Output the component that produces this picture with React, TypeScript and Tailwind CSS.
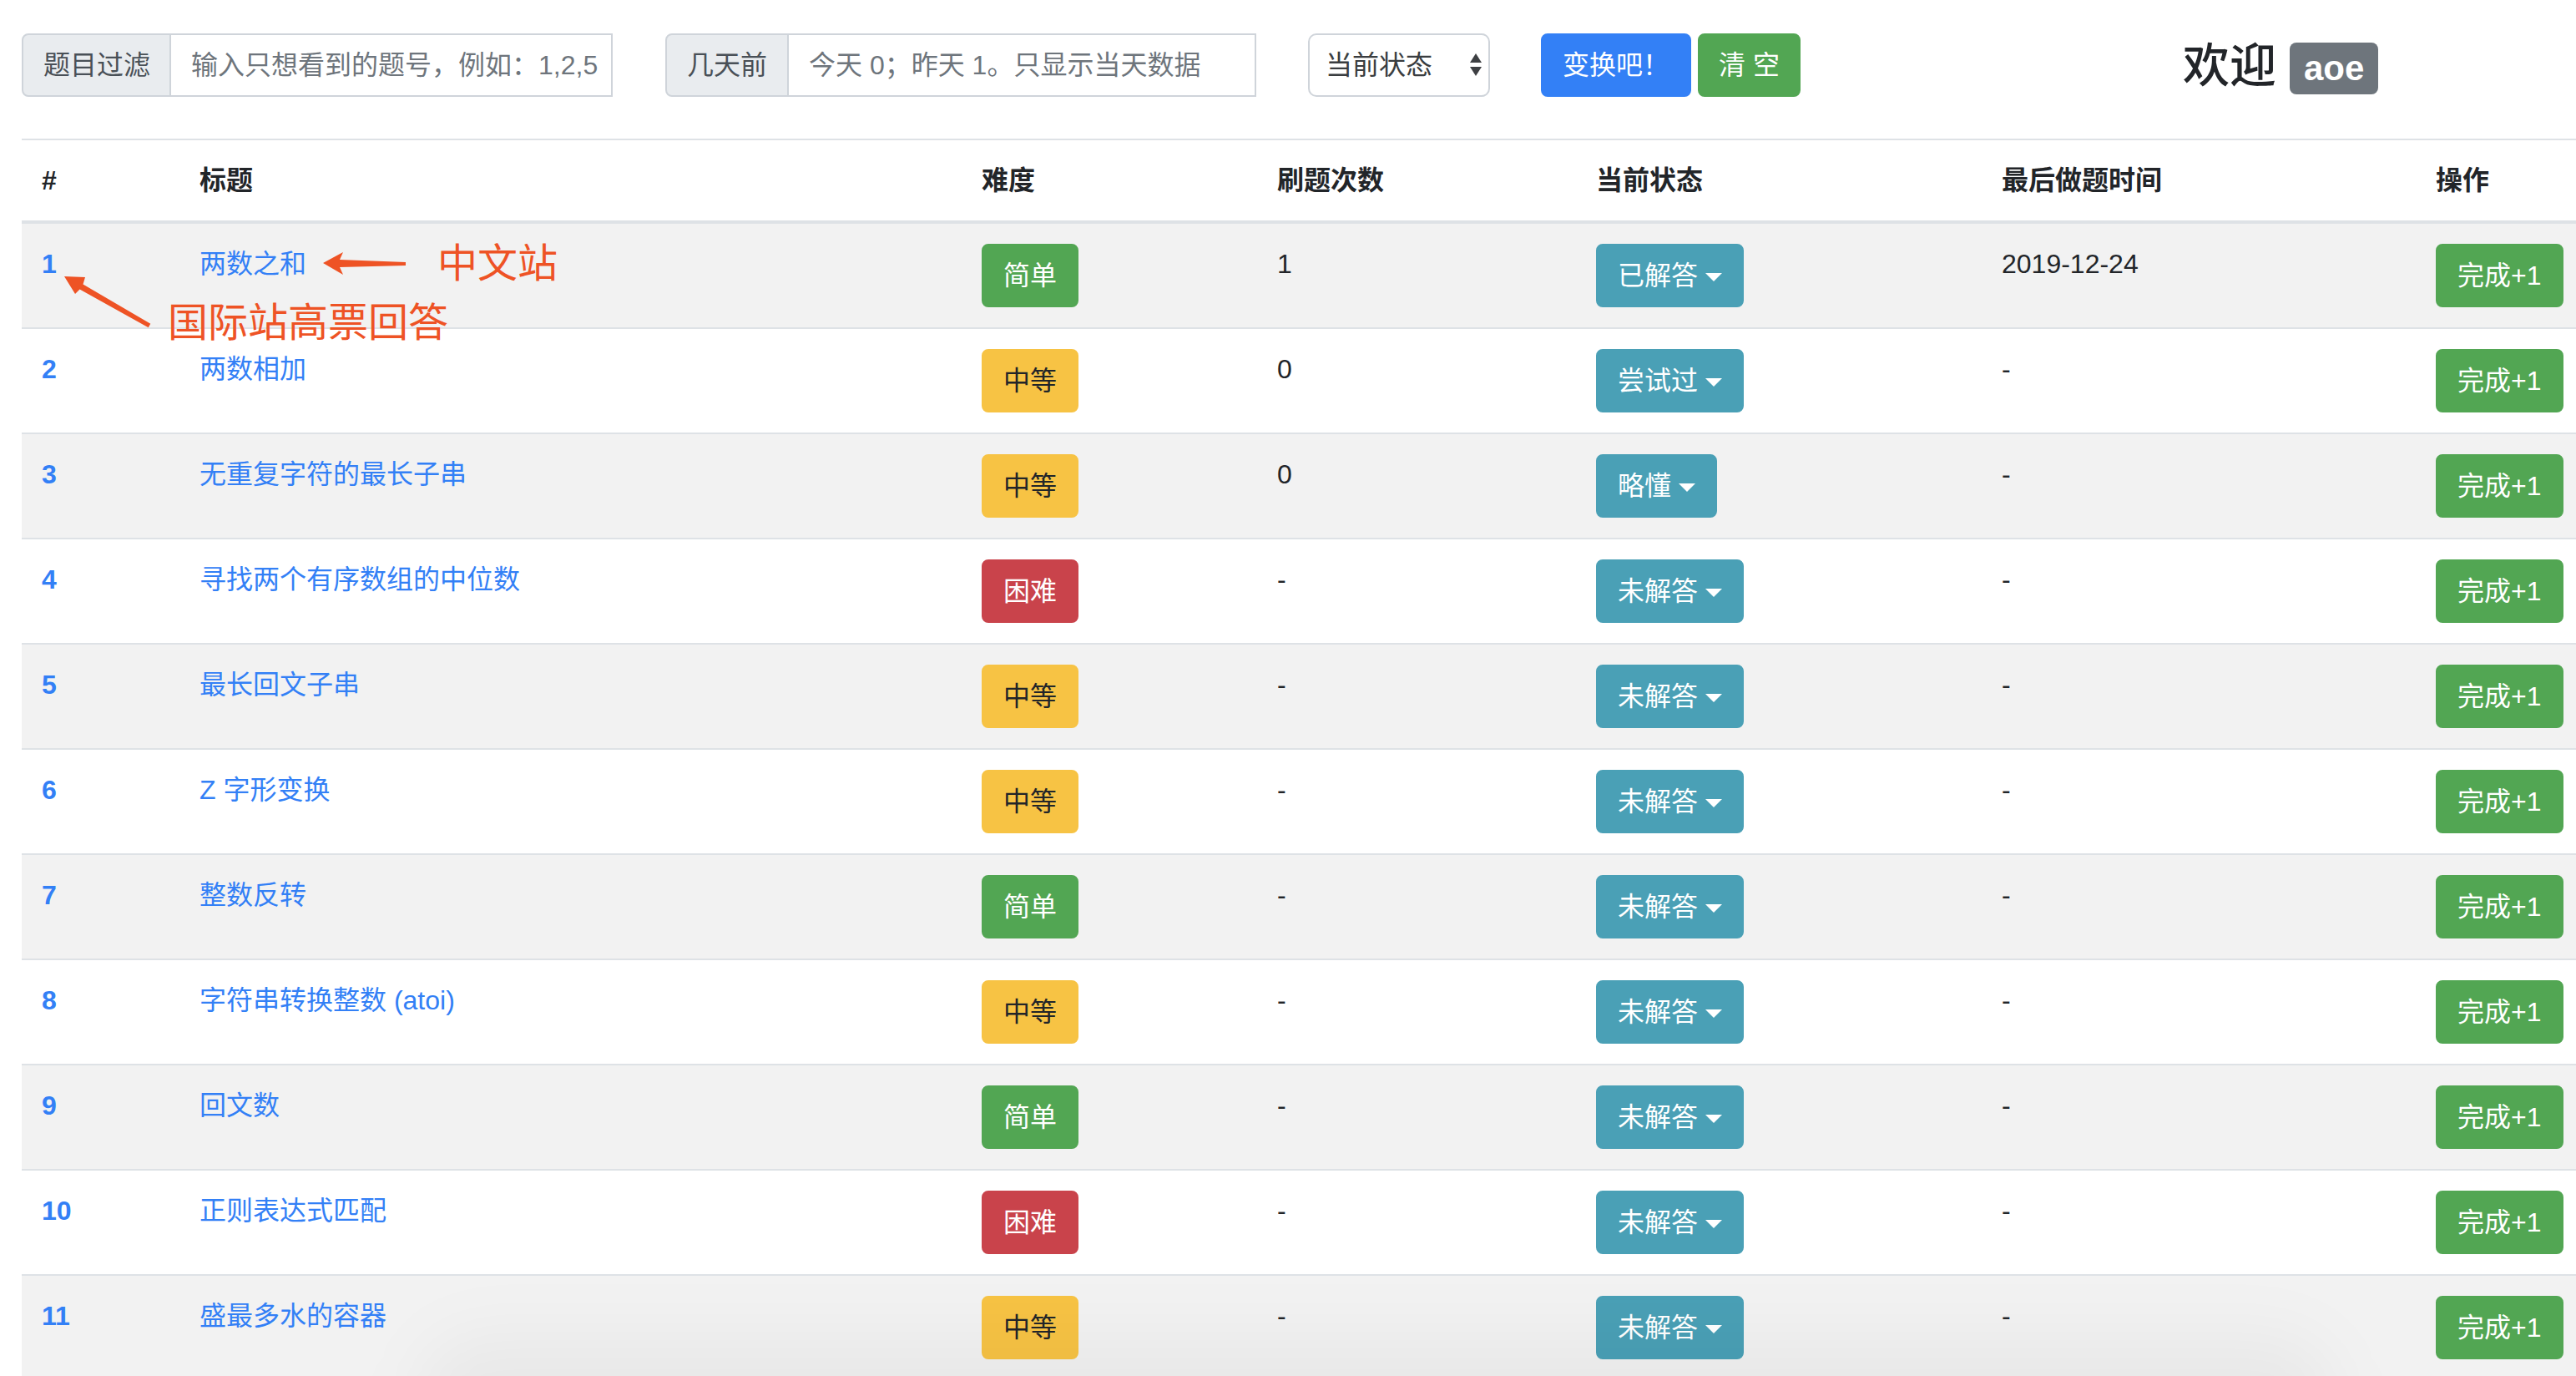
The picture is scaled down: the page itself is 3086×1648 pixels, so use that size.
import React from 'react';

type Row = [number, string, string, string, string, string];

const rows: Row[] = [
  [1, '两数之和', '简单', '1', '已解答', '2019-12-24'],
  [2, '两数相加', '中等', '0', '尝试过', '-'],
  [3, '无重复字符的最长子串', '中等', '0', '略懂', '-'],
  [4, '寻找两个有序数组的中位数', '困难', '-', '未解答', '-'],
  [5, '最长回文子串', '中等', '-', '未解答', '-'],
  [6, 'Z 字形变换', '中等', '-', '未解答', '-'],
  [7, '整数反转', '简单', '-', '未解答', '-'],
  [8, '字符串转换整数 (atoi)', '中等', '-', '未解答', '-'],
  [9, '回文数', '简单', '-', '未解答', '-'],
  [10, '正则表达式匹配', '困难', '-', '未解答', '-'],
  [11, '盛最多水的容器', '中等', '-', '未解答', '-'],
];

const diffClass: Record<string, string> = {
  简单: 'bg-[#52a653] border-[#52a653] text-white',
  中等: 'bg-[#f7c344] border-[#f7c344] text-[#222529]',
  困难: 'bg-[#c9434b] border-[#c9434b] text-white',
};

const btnBase =
  'inline-flex items-center justify-center shrink-0 h-[76px] px-[24px] border-2 rounded-[8px] text-[32px] leading-[48px] whitespace-nowrap';

function Caret() {
  return (
    <span className="inline-block ml-[9px] w-0 h-0 border-t-[10px] border-t-white border-x-[10px] border-x-transparent border-b-0 translate-y-[2px]" />
  );
}

function SelectArrows() {
  return (
    <svg width="14" height="28" viewBox="0 0 14 28" className="block">
      <polygon points="0,11 7,0 14,11" fill="#3d3f42" />
      <polygon points="0,16 14,16 7,27" fill="#3d3f42" />
    </svg>
  );
}

function Annotations() {
  return (
    <>
      <svg
        className="absolute left-0 top-0 pointer-events-none"
        width="700"
        height="450"
        viewBox="0 0 700 450"
      >
        <polygon
          points="387,315 411,302 407,311 486,314 486,318 407,320 411,329"
          fill="#ee5325"
        />
        <polygon
          points="77,331 102,332 99.5,340.5 180.3,387.8 177.7,392.2 95.5,346.5 90,352"
          fill="#ee5325"
        />
      </svg>
      <div className="absolute left-[524px] top-[287px] text-[48px] leading-[48px] text-[#ee5325] font-['Noto_Sans_CJK_SC',sans-serif] whitespace-nowrap pointer-events-none">
        中文站
      </div>
      <div className="absolute left-[201px] top-[358px] text-[48px] leading-[48px] text-[#ee5325] font-['Noto_Sans_CJK_SC',sans-serif] whitespace-nowrap pointer-events-none">
        国际站高票回答
      </div>
    </>
  );
}

export default function App() {
  const cell = 'border-t-2 border-[#dee2e6] p-[24px] align-top text-left';
  return (
    <div className="relative w-[3086px] h-[1648px] overflow-hidden bg-white text-[#222529] font-['Liberation_Sans','Noto_Sans_CJK_SC',sans-serif] text-[32px] leading-[48px]">
      {/* top form */}
      <div className="flex items-center pl-[26px] pt-[40px]">
        <div className="flex h-[76px] shrink-0">
          <div className="flex items-center shrink-0 w-[179px] pl-[24px] border-2 border-[#cfd4da] bg-[#e9ecef] rounded-l-[8px] text-[#495057] whitespace-nowrap">
            题目过滤
          </div>
          <input
            className="w-[529px] h-[76px] pl-[24px] pr-[2px] border-2 border-l-0 border-[#cfd4da] outline-none text-[32px] text-[#495057] placeholder:text-[#6e757c]"
            placeholder="输入只想看到的题号，例如：1,2,5"
          />
        </div>
        <div className="flex h-[76px] ml-[63px] shrink-0">
          <div className="flex items-center shrink-0 w-[148px] pl-[24px] border-2 border-[#cfd4da] bg-[#e9ecef] rounded-l-[8px] text-[#495057] whitespace-nowrap">
            几天前
          </div>
          <input
            className="w-[560px] h-[76px] pl-[24px] pr-[2px] border-2 border-l-0 border-[#cfd4da] outline-none text-[32px] text-[#495057] placeholder:text-[#6e757c]"
            placeholder="今天 0；昨天 1。只显示当天数据"
          />
        </div>
        <div className="flex items-center justify-between shrink-0 ml-[62px] w-[218px] h-[76px] pl-[19px] pr-[8px] border-2 border-[#cfd4da] rounded-[10px] bg-white text-[#3a3d40] whitespace-nowrap">
          <span>当前状态</span>
          <SelectArrows />
        </div>
        <button className={`${btnBase} ml-[61px] w-[180px] bg-[#3380f6] border-[#3380f6] text-white`}>
          变换吧！
        </button>
        <button className={`${btnBase} ml-[8px] w-[123px] bg-[#52a653] border-[#52a653] text-white`}>
          清 空
        </button>
        <h3 className="ml-[458px] flex items-center text-[56px] leading-[67px] font-medium text-[#222529] whitespace-nowrap">
          <span>欢迎</span>
          <span className="ml-[16px] inline-flex items-center h-[62px] px-[17px] rounded-[8px] bg-[#6e757c] text-white text-[42px] font-bold leading-[42px] mt-[8px]">
            aoe
          </span>
        </h3>
      </div>

      {/* table */}
      <table className="ml-[26px] mt-[50px] w-[3060px] table-fixed">
        <colgroup>
          <col className="w-[189px]" />
          <col className="w-[937px]" />
          <col className="w-[354px]" />
          <col className="w-[382px]" />
          <col className="w-[486px]" />
          <col className="w-[520px]" />
          <col className="w-[192px]" />
        </colgroup>
        <thead>
          <tr>
            {['#', '标题', '难度', '刷题次数', '当前状态', '最后做题时间', '操作'].map((h) => (
              <th key={h} className={`${cell} border-b-4 font-bold whitespace-nowrap`}>
                {h}
              </th>
            ))}
          </tr>
        </thead>
        <tbody>
          {rows.map(([id, title, diff, count, status, date], i) => (
            <tr key={id} className={i % 2 === 0 ? 'bg-[#f2f2f2]' : 'bg-white'}>
              <th className={`${cell} font-bold`}>
                <a className="text-[#3380f6]">{id}</a>
              </th>
              <td className={cell}>
                <a className="text-[#3380f6] whitespace-nowrap">{title}</a>
              </td>
              <td className={cell}>
                <div className="flex">
                  <button className={`${btnBase} ${diffClass[diff]}`}>{diff}</button>
                </div>
              </td>
              <td className={cell}>{count}</td>
              <td className={cell}>
                <div className="flex">
                  <button className={`${btnBase} bg-[#4aa0b6] border-[#4aa0b6] text-white`}>
                    {status}
                    <Caret />
                  </button>
                </div>
              </td>
              <td className={cell}>{date}</td>
              <td className={cell}>
                <div className="flex">
                  <button className={`${btnBase} bg-[#52a653] border-[#52a653] text-white`}>完成+1</button>
                </div>
              </td>
            </tr>
          ))}
        </tbody>
      </table>

      <Annotations />
      <div className="absolute left-[500px] top-[1600px] w-[2300px] h-[160px] rounded-full bg-black/[0.04] blur-2xl pointer-events-none" />
    </div>
  );
}
